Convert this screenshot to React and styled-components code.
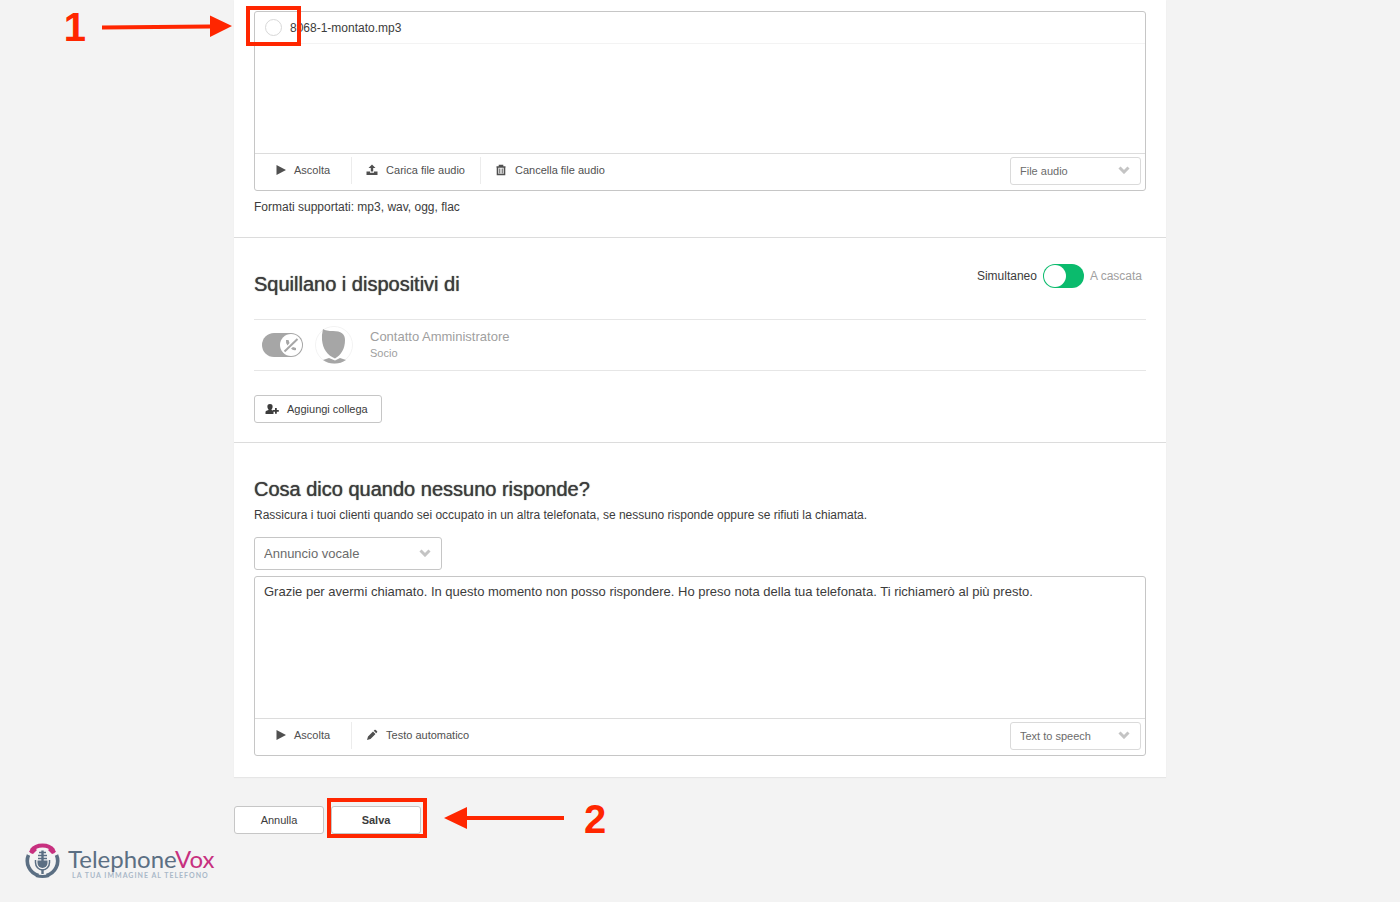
import styled, { createGlobalStyle } from 'styled-components';
import { useState } from 'react';

const GlobalStyle = createGlobalStyle`
  * {
    box-sizing: border-box;
  }
  body {
    margin: 0;
    background-color: #f3f3f3;
    color: #3c3c3c;
    font-family: "Liberation Sans", Arial, sans-serif;
    font-size: 12px;
    line-height: 16px;
  }
  button, input, select, textarea {
    font-family: inherit;
    color: inherit;
    margin: 0;
  }
`;

const Container = styled.div`
  max-width: 932px;
  margin: 0 auto;
`;

const Panel = styled.main`
  background-color: white;
  box-shadow: 0 1px 1px #e6e6e6;
`;

const Section = styled.section`
  padding: ${(props) => props.$padding};
  border-bottom: ${(props) => (props.$last ? 'none' : '1px solid #dcdcdc')};
`;

const Title = styled.h2`
  margin: 0;
  font-size: 20px;
  line-height: 24px;
  font-weight: 400;
  text-shadow: 0 0 1px #3c3c3c;
`;

const SectionHeader = styled.div`
  display: flex;
  align-items: flex-start;
  justify-content: space-between;
  padding-right: 4px;

  ${Title} {
    padding-top: 8px;
  }
`;

const Text = styled.p`
  margin: 0;
`;

const Formats = styled(Text)`
  margin-top: 8px;
`;

const Description = styled(Text)`
  margin-top: 6px;
`;

const Box = styled.div`
  border: 1px solid #c6c6c6;
  border-radius: 3px;
`;

const FileList = styled.div`
  min-height: 141px;
`;

const FileRow = styled.div`
  position: relative;
  display: flex;
  align-items: center;
  height: 32px;
  padding-left: 10px;
  border-bottom: 1px solid #f3f3f3;
`;

const FileLabel = styled.label`
  display: flex;
  align-items: center;
  gap: 8px;
`;

const Radio = styled.input`
  appearance: none;
  width: 17px;
  height: 17px;
  border: 1px solid #d8d8d8;
  border-radius: 50%;
  background-color: white;
`;

const Toolbar = styled.div`
  display: flex;
  justify-content: space-between;
  align-items: flex-start;
  height: 37px;
  padding: 3px 4px 0 8px;
  border-top: 1px solid #dcdcdc;
`;

const Tools = styled.div`
  display: flex;
  align-items: center;
`;

const Tool = styled.button`
  display: flex;
  align-items: center;
  gap: 8px;
  height: 27px;
  padding: 0 15px 2px 14px;
  border: none;
  background: none;
  font-size: 11px;
  color: #505050;
  cursor: pointer;

  &:first-child {
    padding: 0 21px 2px 13px;
  }
  & + & {
    border-left: 1px solid #ececec;
  }
`;

const SelectWrapper = styled.div`
  position: relative;
  width: ${(props) => (props.$large ? '188px' : '131px')};
`;

const Select = styled.select`
  appearance: none;
  display: block;
  width: 100%;
  height: ${(props) => (props.$large ? '33px' : '28px')};
  padding: 0 9px;
  border: 1px solid ${(props) => (props.$large ? '#c6c6c6' : '#dadada')};
  border-radius: 3px;
  background-color: white;
  color: #6b6b6b;
  font-size: ${(props) => (props.$large ? '13px' : '11px')};
`;

const SelectArrow = styled.svg`
  position: absolute;
  right: 11px;
  top: 50%;
  width: 12px;
  height: 8px;
  margin-top: -5px;
  pointer-events: none;
`;

const ModeLabel = styled.label`
  display: flex;
  align-items: center;
  gap: 6px;
  height: 24px;
`;

const Muted = styled.span`
  color: #a0a0a0;
`;

const ToggleWrapper = styled.span`
  position: relative;
  display: flex;
`;

const Toggle = styled.input`
  appearance: none;
  width: 41px;
  height: 24px;
  border-radius: 12px;
  background-color: ${(props) => props.$color};
  cursor: pointer;

  &::before {
    content: '';
    display: block;
    width: 22px;
    height: 22px;
    margin: 1px;
    border-radius: 50%;
    background-color: white;
  }
  &:checked::before {
    margin-left: 18px;
  }
`;

const ToggleIcon = styled.svg`
  position: absolute;
  right: 3px;
  top: 3px;
  width: 18px;
  height: 18px;
  pointer-events: none;
`;

const Contact = styled.div`
  display: flex;
  align-items: center;
  height: 52px;
  margin-top: 23px;
  padding-left: 8px;
  border-top: 1px solid #e6e6e6;
  border-bottom: 1px solid #e6e6e6;
  color: #a0a0a0;
`;

const Avatar = styled.svg`
  width: 38px;
  height: 38px;
  margin: 0 17px 0 12px;
`;

const ContactName = styled.div`
  font-size: 13px;
`;

const ContactRole = styled.div`
  font-size: 11px;
`;

const Button = styled.button`
  display: flex;
  align-items: center;
  justify-content: center;
  min-width: 90px;
  height: 28px;
  padding: 0 10px;
  border: 1px solid #c6c6c6;
  border-radius: 3px;
  background-color: white;
  color: #3c3c3c;
  font-size: 11px;
  font-weight: ${(props) => (props.$primary ? 700 : 400)};
  cursor: pointer;
`;

const AddColleague = styled(Button)`
  justify-content: flex-start;
  gap: 8px;
  min-width: 128px;
  margin-top: 24px;
`;

const MessageType = styled(SelectWrapper)`
  margin: 14px 0 6px;
`;

const Message = styled.textarea`
  display: block;
  width: 100%;
  height: 141px;
  padding: 7px 9px;
  border: none;
  border-radius: 3px;
  outline: none;
  resize: none;
  background: none;
  font-size: 13px;
  line-height: 16px;
`;

const Actions = styled.div`
  display: flex;
  align-items: center;
  gap: 7px;
  padding-top: 29px;
`;

const SaveStep = styled.div`
  position: relative;
  display: flex;
`;

const Highlight = styled.span`
  position: absolute;
  inset: ${(props) => props.$inset};
  width: ${(props) => props.$width || 'auto'};
  border: 4px solid #ff2600;
  pointer-events: none;
`;

const Callout = styled.div`
  position: absolute;
  top: 50%;
  display: flex;
  align-items: center;
  height: 40px;
  margin-top: -21px;
  gap: ${(props) => (props.$after ? '20px' : '16px')};
  left: ${(props) => (props.$after ? 'calc(100% + 23px)' : 'auto')};
  right: ${(props) => (props.$after ? 'auto' : 'calc(100% + 23px)')};
  color: #ff2600;
  font-size: 40px;
  line-height: 40px;
  font-weight: 700;

  svg {
    flex-shrink: 0;
  }
`;

const Brand = styled.footer`
  display: flex;
  align-items: flex-start;
  gap: 7px;
  padding: 9px 0 0 25px;
`;

const BrandName = styled.div`
  color: #5b6f83;
  font-family: Lato, sans-serif;
  font-size: 24px;
  line-height: 32px;
`;

const Vox = styled.span`
  color: #c7307f;
`;

const Tagline = styled.div`
  margin-top: -4px;
  padding-left: 4px;
  color: #a9b8c8;
  font-family: Lato, sans-serif;
  font-size: 7px;
  line-height: 8px;
  font-weight: 700;
  letter-spacing: 1px;
`;

const PlayIcon = () => (
  <svg width="10" height="10" viewBox="0 0 10 10" fill="currentColor" aria-hidden="true">
    <path d="M0.500 0L10 5L0.500 10Z" />
  </svg>
);

const UploadIcon = () => (
  <svg width="12" height="12" viewBox="0 0 12 12" fill="currentColor" aria-hidden="true">
    <path d="M6 0.500L9.500 4H7.200V7.500H4.800V4H2.500Z" />
    <path d="M0.500 7.500H4V8.800H8V7.500H11.500V11H0.500Z" />
  </svg>
);

const TrashIcon = () => (
  <svg width="12" height="12" viewBox="0 0 12 12" fill="none" stroke="currentColor" aria-hidden="true">
    <path d="M1.500 3H10.500M4.500 2.500V1.500H7.500V2.500M2.500 3V10.500H9.500V3" strokeWidth="1.600" />
    <path d="M4.800 4.500V9.500M7.200 4.500V9.500" />
  </svg>
);

const PencilIcon = () => (
  <svg width="12" height="12" viewBox="0 0 12 12" fill="currentColor" aria-hidden="true">
    <path d="M1 11L2 7.500L7 2.500L9.500 5L4.500 10ZM7.700 1.800L8.800 0.800Q9.300 0.500 9.800 0.900L11.100 2.200Q11.500 2.700 11.100 3.200L10.200 4.300Z" />
  </svg>
);

const UserPlusIcon = () => (
  <svg width="14" height="12" viewBox="0 0 14 12" fill="currentColor" aria-hidden="true">
    <path d="M5 1C7 1 7.800 2.300 7.600 4C7.500 5.300 7 6 6.500 6.500V7L8.500 7.800V11H0.500V9Q0.500 8 1.500 7.700L3.500 7V6.500C3 6 2.500 5.300 2.400 4C2.200 2.300 3 1 5 1Z" />
    <path d="M10 5H11.800V7H13.800V8.800H11.800V10.800H10V8.800H8V7H10Z" />
  </svg>
);

const Dropdown = ({ large, label, options }) => {
  const Wrapper = large ? MessageType : SelectWrapper;
  return (
    <Wrapper $large={large}>
      <Select $large={large} aria-label={label}>
        {options.map((option) => (
          <option key={option}>{option}</option>
        ))}
      </Select>
      <SelectArrow viewBox="0 0 12 8" fill="none" stroke="#c4c4c4" strokeWidth="3">
        <path d="M1.500 1.500L6 6L10.500 1.500" />
      </SelectArrow>
    </Wrapper>
  );
};

const Logo = () => (
  <svg width="36" height="36" viewBox="0 0 36 36" fill="none" aria-hidden="true">
    <g stroke="#5b6f83">
      <path d="M3.500 12A15.200 15.200 0 0 0 13.500 32.500" strokeWidth="3.600" />
      <path d="M31.500 12A15.200 15.200 0 0 1 21.500 32.500" strokeWidth="3.600" />
      <path d="M10.500 17V19.500A7 7.500 0 0 0 24.500 19.500V17" strokeWidth="1.500" />
      <path d="M17.500 26.500V31" strokeWidth="2.400" />
      <path d="M11 32.500Q17.500 34.500 24 32.500" strokeWidth="3" />
      <path d="M14 9.500H21M13 12.500H22M13 15.500H22" strokeWidth="1.600" />
      <path d="M17.500 7.500V19" strokeWidth="2.400" />
    </g>
    <path d="M12.500 17.500H22.500V20A5 5 0 0 1 12.500 20Z" fill="#5b6f83" />
    <path d="M6.500 7.500C11.500 0.800 23.500 0.800 28.500 7.500" stroke="#c7307f" strokeWidth="4" />
    <path d="M4 8.500L8 3.500L12 7L8 11Q5.500 10.500 4 8.500ZM31 8.500L27 3.500L23 7L27 11Q29.500 10.500 31 8.500Z" fill="#c7307f" />
  </svg>
);

const App = () => {
  const [message, setMessage] = useState(
    'Grazie per avermi chiamato. In questo momento non posso rispondere. Ho preso nota della tua telefonata. Ti richiamerò al più presto.'
  );
  const [cascade, setCascade] = useState(false);
  const [enabled, setEnabled] = useState(true);

  return (
    <>
      <GlobalStyle />
      <Container>
        <Panel>
          <Section $padding="11px 20px 22px">
            <Box>
              <FileList>
                <FileRow>
                  <FileLabel>
                    <Radio type="radio" name="file" />
                    8068-1-montato.mp3
                  </FileLabel>
                  <Highlight $inset="-6px auto -3px -9px" $width="55px" />
                  <Callout>
                    1
                    <svg width="130" height="24" viewBox="0 0 130 24" fill="#ff2600">
                      <path d="M0 10.500L108 9.500V0.500L130 11L108 22V13.500L0 14.500Z" />
                    </svg>
                  </Callout>
                </FileRow>
              </FileList>
              <Toolbar>
                <Tools>
                  <Tool><PlayIcon /> Ascolta</Tool>
                  <Tool><UploadIcon /> Carica file audio</Tool>
                  <Tool><TrashIcon /> Cancella file audio</Tool>
                </Tools>
                <Dropdown label="Sorgente audio" options={['File audio', 'Text to speech']} />
              </Toolbar>
            </Box>
            <Formats>Formati supportati: mp3, wav, ogg, flac</Formats>
          </Section>

          <Section $padding="26px 20px 19px">
            <SectionHeader>
              <Title>Squillano i dispositivi di</Title>
              <ModeLabel>
                Simultaneo
                <Toggle
                  type="checkbox"
                  $color="#0bbb6d"
                  checked={cascade}
                  onChange={() => setCascade(!cascade)}
                />
                <Muted>A cascata</Muted>
              </ModeLabel>
            </SectionHeader>
            <Contact>
              <ToggleWrapper>
                <Toggle
                  type="checkbox"
                  $color="#a6a6a6"
                  aria-label="Contatto Amministratore"
                  checked={enabled}
                  onChange={() => setEnabled(!enabled)}
                />
                <ToggleIcon viewBox="0 0 18 18" fill="none" stroke="#a6a6a6">
                  <path d="M2.500 15.500L15.500 3" strokeWidth="2" />
                  <path d="M4 4L6.500 4L7.500 7L5.500 9.500Q3.500 7 4 4ZM9 12.500L11 11L14 12V14Q11 15 9 12.500Z" fill="#a6a6a6" stroke="none" />
                </ToggleIcon>
              </ToggleWrapper>
              <Avatar viewBox="0 0 38 38">
                <circle cx="19" cy="19" r="18.500" fill="white" stroke="#f3f3f3" />
                <path d="M8 3Q11 5 18 5Q30 5 30 14C30 23 26 29 20 32.500C12 29 8 23 7 14Q6.500 9 8 3Z" fill="#a6a6a6" />
                <path d="M8 34L14 32L20 34.500L25 32L31 34Q26 37.500 19.500 37.500Q13 37.500 8 34Z" fill="#a6a6a6" />
              </Avatar>
              <div>
                <ContactName>Contatto Amministratore</ContactName>
                <ContactRole>Socio</ContactRole>
              </div>
            </Contact>
            <AddColleague><UserPlusIcon /> Aggiungi collega</AddColleague>
          </Section>

          <Section $padding="34px 20px 21px" $last>
            <Title>Cosa dico quando nessuno risponde?</Title>
            <Description>
              Rassicura i tuoi clienti quando sei occupato in un altra telefonata, se nessuno risponde oppure se rifiuti la chiamata.
            </Description>
            <Dropdown large label="Tipo di messaggio" options={['Annuncio vocale']} />
            <Box>
              <Message
                aria-label="Messaggio"
                spellCheck={false}
                value={message}
                onChange={(e) => setMessage(e.target.value)}
              />
              <Toolbar>
                <Tools>
                  <Tool><PlayIcon /> Ascolta</Tool>
                  <Tool><PencilIcon /> Testo automatico</Tool>
                </Tools>
                <Dropdown label="Sorgente messaggio" options={['Text to speech', 'File audio']} />
              </Toolbar>
            </Box>
          </Section>
        </Panel>

        <Actions>
          <Button>Annulla</Button>
          <SaveStep>
            <Button $primary>Salva</Button>
            <Highlight $inset="-8px -6px -4px -4px" />
            <Callout $after>
              <svg width="120" height="24" viewBox="0 0 120 24" fill="#ff2600">
                <path d="M0 11L23 0V9H120V13H23V22Z" />
              </svg>
              2
            </Callout>
          </SaveStep>
        </Actions>
      </Container>
      <Brand>
        <Logo />
        <div>
          <BrandName>Telephone<Vox>Vox</Vox></BrandName>
          <Tagline>LA TUA IMMAGINE AL TELEFONO</Tagline>
        </div>
      </Brand>
    </>
  );
};

export default App;
